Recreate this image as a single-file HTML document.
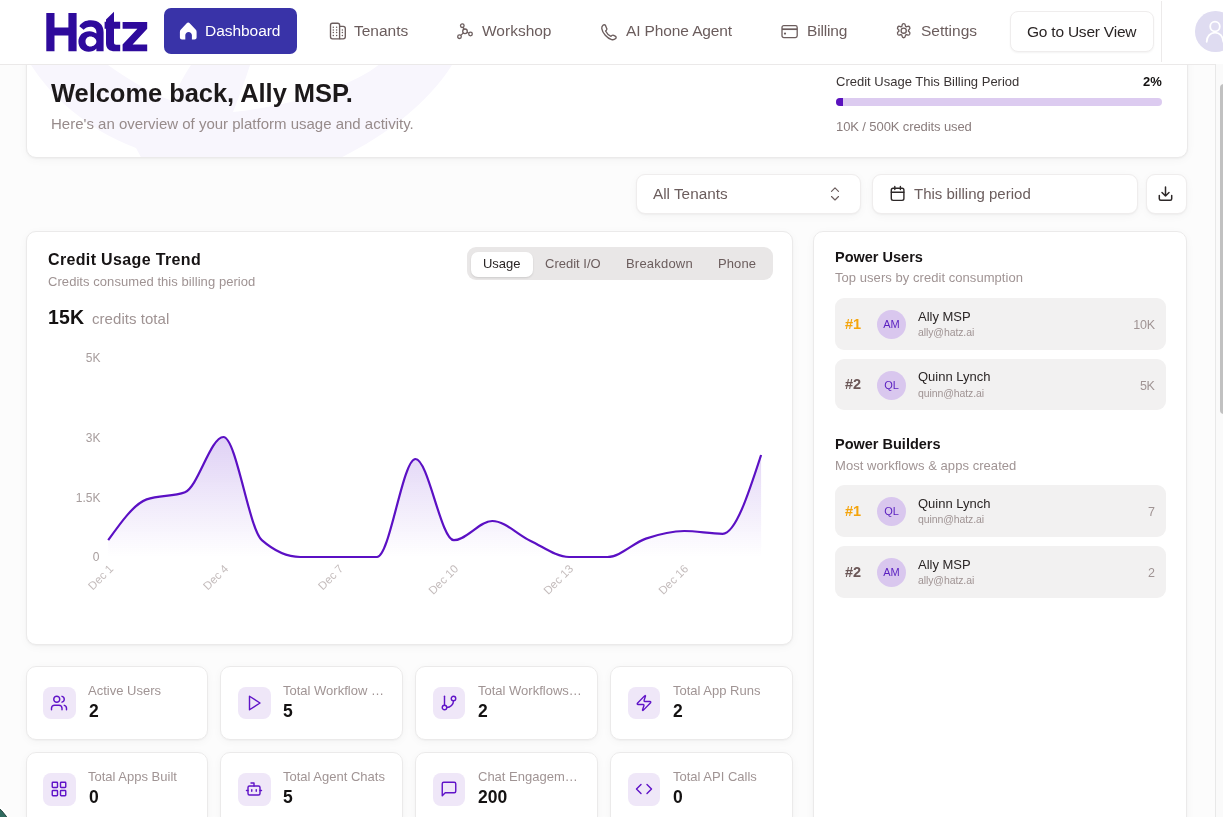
<!DOCTYPE html>
<html><head><meta charset="utf-8">
<style>
*{box-sizing:border-box;margin:0;padding:0}
html,body{width:1223px;height:817px;overflow:hidden}
body{background:#fcfcfc;font-family:"Liberation Sans",sans-serif;position:relative;color:#1b1818}
.a{position:absolute;white-space:nowrap;will-change:transform}
.card{position:absolute;background:#fff;border:1px solid #ebeaea;border-radius:10px;box-shadow:0 1px 2px rgba(0,0,0,.04),0 2px 10px rgba(0,0,0,.035)}
svg{position:absolute;overflow:visible}
.nav{color:#6b5d5d;font-size:15.5px;line-height:18px}
.sub{color:#a09494}
.ib{position:absolute;width:32.5px;height:32.5px;border-radius:8px;background:#efe7f8}

.sl{font-size:13px;color:#a09494;line-height:15px;overflow:hidden;text-overflow:ellipsis}
.sv{font-size:17.5px;font-weight:bold;color:#141212;line-height:20px}
.row{position:absolute;left:20.7px;width:331.2px;height:51.5px;border-radius:9px;background:#f2f1f1}
.rk{position:absolute;left:10px;top:17.5px;font-size:14.5px;font-weight:bold;line-height:16px}
.av{position:absolute;left:42px;top:12px;width:29px;height:29px;border-radius:50%;background:#d9c7ee;color:#5a1fc0;font-size:11px;line-height:29px;text-align:center}
.nm{position:absolute;left:83px;top:10.5px;font-size:13px;color:#2b2626;line-height:15px}
.em{position:absolute;left:83px;top:28px;font-size:10.5px;color:#a09494;line-height:12px;letter-spacing:-.1px}
.vl{position:absolute;right:11.5px;top:20px;font-size:12.5px;color:#a09494;line-height:15px;letter-spacing:-.3px}
</style></head><body>

<!-- welcome card -->
<div class="card" style="left:25.5px;top:20px;width:1162px;height:138.2px;overflow:hidden">
 <svg style="left:-25.5px;top:-20px" width="1223" height="160">
  <path fill="#f8f6fd" fill-rule="evenodd" d="M30,64 C50,95 85,128 135,147 L142,160 L333,160 C380,138 425,105 451,64 Z M107,64 C125,77 150,92 171,100 C175,90 182,76 190,64 Z M249,64 C244,80 238,96 232,111 C300,104 355,82 377.5,64 Z"/>
 </svg>
</div>
<div class="a" style="left:50.7px;top:78px;font-size:25.5px;font-weight:bold;color:#1c191a;line-height:30px;letter-spacing:-.05px">Welcome back, Ally MSP.</div>
<div class="a sub" style="left:51px;top:115px;font-size:15px;line-height:18px;color:#978b8b">Here's an overview of your platform usage and activity.</div>
<div class="a" style="left:836.2px;top:74px;font-size:13px;line-height:15px;color:#3a3434">Credit Usage This Billing Period</div>
<div class="a" style="left:1143px;top:74.3px;font-size:13px;font-weight:bold;line-height:15px;color:#141212">2%</div>
<div class="a" style="left:836.2px;top:98.3px;width:326px;height:8px;border-radius:4px;background:#dccbf0"></div>
<div class="a" style="left:836.2px;top:98.3px;width:6.5px;height:8px;border-radius:4px 0 0 4px;background:#5a12be"></div>
<div class="a" style="left:836px;top:118.6px;font-size:13px;line-height:15px;color:#8a7d7d;letter-spacing:-.1px">10K / 500K credits used</div>

<!-- filter row -->
<div class="card" style="left:636.3px;top:173.8px;width:224.5px;height:40.7px;border-radius:9px;border-color:#efeded"></div>
<div class="a nav" style="left:653.2px;top:184.5px;font-size:15.3px">All Tenants</div>
<svg style="left:828px;top:186px" width="14" height="16" viewBox="0 0 14 16" fill="none" stroke="#6b5d5d" stroke-width="1.15" stroke-linecap="round" stroke-linejoin="round">
 <path d="M3.5,5.3L7,1.8L10.5,5.3M3.5,10.5L7,14L10.5,10.5"/>
</svg>
<div class="card" style="left:872px;top:173.8px;width:265.6px;height:40.7px;border-radius:9px;border-color:#efeded"></div>
<svg style="left:889px;top:185px" width="17" height="17" viewBox="0 0 17 17" fill="none" stroke="#2d2828" stroke-width="1.4" stroke-linecap="round">
 <rect x="2.3" y="3.2" width="12.6" height="12.2" rx="1.8"/>
 <path d="M2.3,7.2H14.9M5.8,1.5V4.5M11.4,1.5V4.5"/>
</svg>
<div class="a nav" style="left:914.3px;top:184.5px;font-size:15px">This billing period</div>
<div class="card" style="left:1145.9px;top:173.8px;width:41px;height:40.7px;border-radius:9px;border-color:#efeded"></div>
<svg style="left:1157px;top:185px" width="17" height="17" viewBox="0 0 17 17" fill="none" stroke="#2d2828" stroke-width="1.5" stroke-linecap="round" stroke-linejoin="round">
 <path d="M2.3,10.5V13.8C2.3,14.7,2.9,15.3,3.8,15.3H13.2C14.1,15.3,14.7,14.7,14.7,13.8V10.5M5,7.5L8.5,11L12,7.5M8.5,11V2"/>
</svg>

<!-- chart card -->
<div class="card" style="left:25.5px;top:230.6px;width:767.8px;height:414px"></div>
<div class="a" style="left:47.7px;top:251px;font-size:16px;font-weight:bold;line-height:18px;color:#161314;letter-spacing:.35px">Credit Usage Trend</div>
<div class="a" style="left:47.7px;top:273.5px;font-size:13px;line-height:15px;color:#9f9393;letter-spacing:.06px">Credits consumed this billing period</div>
<div class="a" style="left:47.7px;top:305.5px;font-size:19.5px;font-weight:bold;line-height:23px;color:#141212;letter-spacing:.2px">15K</div>
<div class="a" style="left:91.7px;top:310px;font-size:15px;line-height:18px;color:#9f9393;letter-spacing:.05px">credits total</div>

<div class="a" style="left:466.5px;top:247px;width:306px;height:33px;border-radius:9px;background:#e9e7e7"></div>
<div class="a" style="left:471px;top:251.5px;width:61.7px;height:24.7px;border-radius:7px;background:#fff;box-shadow:0 1px 2px rgba(0,0,0,.12)"></div>
<div class="a" style="left:482.7px;top:255.5px;font-size:13px;line-height:15px;color:#2a2525;letter-spacing:-.05px">Usage</div>
<div class="a" style="left:545.4px;top:255.5px;font-size:13px;line-height:15px;color:#6b5d5d">Credit I/O</div>
<div class="a" style="left:625.5px;top:255.5px;font-size:13px;line-height:15px;color:#6b5d5d;letter-spacing:.2px">Breakdown</div>
<div class="a" style="left:717.6px;top:255.5px;font-size:13px;line-height:15px;color:#6b5d5d;letter-spacing:.1px">Phone</div>

<svg style="left:0;top:0" width="1223" height="817">
 <defs><linearGradient id="g" x1="0" y1="0" x2="0" y2="1" gradientUnits="objectBoundingBox">
  <stop offset="0" stop-color="#7a3fd6" stop-opacity=".24"/><stop offset="1" stop-color="#7a3fd6" stop-opacity="0"/>
 </linearGradient></defs>
 <g font-family="Liberation Sans" font-size="12" fill="#a79d9d" text-anchor="end">
  <text x="100.5" y="362">5K</text><text x="100.5" y="442">3K</text><text x="100.5" y="502">1.5K</text><text x="99.5" y="560.5">0</text>
 </g>
 <path d="M108.20,540.20C121.00,522.20,133.80,504.20,146.61,499.40C159.41,494.60,172.21,497.00,185.01,492.20C197.81,487.40,210.62,437.00,223.42,437.00C236.22,437.00,249.02,529.00,261.82,540.20C274.63,551.40,287.43,557.00,300.23,557.00C313.03,557.00,325.83,557.00,338.64,557.00C351.44,557.00,364.24,557.00,377.04,557.00C389.84,557.00,402.65,459.00,415.45,459.00C428.25,459.00,441.05,540.20,453.85,540.20C466.65,540.20,479.46,521.00,492.26,521.00C505.06,521.00,517.86,535.00,530.66,541.00C543.47,547.00,556.27,557.00,569.07,557.00C581.87,557.00,594.67,557.00,607.48,557.00C620.28,557.00,633.08,542.93,645.88,538.60C658.68,534.27,671.49,531.00,684.29,531.00C697.09,531.00,709.89,533.80,722.69,533.80C735.50,533.80,748.30,494.40,761.10,455.00L761.10,557L108.20,557Z" fill="url(#g)"/>
 <path d="M108.20,540.20C121.00,522.20,133.80,504.20,146.61,499.40C159.41,494.60,172.21,497.00,185.01,492.20C197.81,487.40,210.62,437.00,223.42,437.00C236.22,437.00,249.02,529.00,261.82,540.20C274.63,551.40,287.43,557.00,300.23,557.00C313.03,557.00,325.83,557.00,338.64,557.00C351.44,557.00,364.24,557.00,377.04,557.00C389.84,557.00,402.65,459.00,415.45,459.00C428.25,459.00,441.05,540.20,453.85,540.20C466.65,540.20,479.46,521.00,492.26,521.00C505.06,521.00,517.86,535.00,530.66,541.00C543.47,547.00,556.27,557.00,569.07,557.00C581.87,557.00,594.67,557.00,607.48,557.00C620.28,557.00,633.08,542.93,645.88,538.60C658.68,534.27,671.49,531.00,684.29,531.00C697.09,531.00,709.89,533.80,722.69,533.80C735.50,533.80,748.30,494.40,761.10,455.00" fill="none" stroke="#5b10c4" stroke-width="2.2"/>
 <g font-family="Liberation Sans" font-size="11.5" fill="#c4bcbc" text-anchor="end">
  <text transform="translate(114,569.5) rotate(-45)">Dec 1</text>
  <text transform="translate(229,569.5) rotate(-45)">Dec 4</text>
  <text transform="translate(344,569.5) rotate(-45)">Dec 7</text>
  <text transform="translate(459,569.5) rotate(-45)">Dec 10</text>
  <text transform="translate(574,569.5) rotate(-45)">Dec 13</text>
  <text transform="translate(689,569.5) rotate(-45)">Dec 16</text>
 </g>
</svg>

<!-- right card -->
<div class="card" style="left:813.3px;top:230.6px;width:374px;height:620px">
 <div class="a" style="left:20.7px;top:17.4px;font-size:14.5px;font-weight:bold;line-height:17px;color:#161314">Power Users</div>
 <div class="a" style="left:20.7px;top:38.6px;font-size:13px;line-height:15px;color:#a09494;letter-spacing:.05px">Top users by credit consumption</div>
 <div class="row" style="top:66.6px"><div class="rk" style="color:#f4a40c">#1</div><div class="av">AM</div><div class="nm">Ally MSP</div><div class="em">ally@hatz.ai</div><div class="vl">10K</div></div>
 <div class="row" style="top:127.4px"><div class="rk" style="color:#6b5757">#2</div><div class="av">QL</div><div class="nm">Quinn Lynch</div><div class="em">quinn@hatz.ai</div><div class="vl">5K</div></div>
 <div class="a" style="left:20.7px;top:204.4px;font-size:14.5px;font-weight:bold;line-height:17px;color:#161314">Power Builders</div>
 <div class="a" style="left:20.7px;top:226.1px;font-size:13px;line-height:15px;color:#a09494;letter-spacing:.05px">Most workflows &amp; apps created</div>
 <div class="row" style="top:253.8px"><div class="rk" style="color:#f4a40c">#1</div><div class="av">QL</div><div class="nm">Quinn Lynch</div><div class="em">quinn@hatz.ai</div><div class="vl">7</div></div>
 <div class="row" style="top:314.6px"><div class="rk" style="color:#6b5757">#2</div><div class="av">AM</div><div class="nm">Ally MSP</div><div class="em">ally@hatz.ai</div><div class="vl">2</div></div>
</div>
<!-- stat cards -->
<div class="card" style="left:25.5px;top:665.5px;width:182.9px;height:74.6px"><div class="ib" style="left:16.7px;top:20.3px"><svg style="left:7.3px;top:7px" width="18" height="18" viewBox="0 0 24 24" fill="none" stroke="#6014c8" stroke-width="1.9" stroke-linecap="round" stroke-linejoin="round"><path d="M16 21v-2a4 4 0 0 0-4-4H6a4 4 0 0 0-4 4v2"/><circle cx="9" cy="7" r="4"/><path d="M22 21v-2a4 4 0 0 0-3-3.87"/><path d="M16 3.13a4 4 0 0 1 0 7.75"/></svg></div><div class="a sl" style="left:61.6px;top:16px;max-width:104px">Active Users</div><div class="a sv" style="left:62px;top:34px">2</div></div>
<div class="card" style="left:220.4px;top:665.5px;width:182.9px;height:74.6px"><div class="ib" style="left:16.7px;top:20.3px"><svg style="left:7.3px;top:7px" width="18" height="18" viewBox="0 0 24 24" fill="none" stroke="#6014c8" stroke-width="1.9" stroke-linecap="round" stroke-linejoin="round"><polygon points="6 3 20 12 6 21 6 3"/></svg></div><div class="a sl" style="left:61.6px;top:16px;max-width:104px">Total Workflow Runs</div><div class="a sv" style="left:62px;top:34px">5</div></div>
<div class="card" style="left:415.3px;top:665.5px;width:182.9px;height:74.6px"><div class="ib" style="left:16.7px;top:20.3px"><svg style="left:7.3px;top:7px" width="18" height="18" viewBox="0 0 24 24" fill="none" stroke="#6014c8" stroke-width="1.9" stroke-linecap="round" stroke-linejoin="round"><line x1="6" x2="6" y1="3" y2="15"/><circle cx="18" cy="6" r="3"/><circle cx="6" cy="18" r="3"/><path d="M18 9a9 9 0 0 1-9 9"/></svg></div><div class="a sl" style="left:61.6px;top:16px;max-width:104px">Total Workflows Created</div><div class="a sv" style="left:62px;top:34px">2</div></div>
<div class="card" style="left:610.3px;top:665.5px;width:182.9px;height:74.6px"><div class="ib" style="left:16.7px;top:20.3px"><svg style="left:7.3px;top:7px" width="18" height="18" viewBox="0 0 24 24" fill="none" stroke="#6014c8" stroke-width="1.9" stroke-linecap="round" stroke-linejoin="round"><path d="M4 14a1 1 0 0 1-.78-1.63l9.9-10.2a.5.5 0 0 1 .86.46l-1.92 6.02A1 1 0 0 0 13 10h7a1 1 0 0 1 .78 1.63l-9.9 10.2a.5.5 0 0 1-.86-.46l1.92-6.02A1 1 0 0 0 11 14z"/></svg></div><div class="a sl" style="left:61.6px;top:16px;max-width:104px">Total App Runs</div><div class="a sv" style="left:62px;top:34px">2</div></div>
<div class="card" style="left:25.5px;top:752.2px;width:182.9px;height:74.6px"><div class="ib" style="left:16.7px;top:20.3px"><svg style="left:7.3px;top:7px" width="18" height="18" viewBox="0 0 24 24" fill="none" stroke="#6014c8" stroke-width="1.9" stroke-linecap="round" stroke-linejoin="round"><rect width="7" height="7" x="3" y="3" rx="1"/><rect width="7" height="7" x="14" y="3" rx="1"/><rect width="7" height="7" x="14" y="14" rx="1"/><rect width="7" height="7" x="3" y="14" rx="1"/></svg></div><div class="a sl" style="left:61.6px;top:16px;max-width:104px">Total Apps Built</div><div class="a sv" style="left:62px;top:34px">0</div></div>
<div class="card" style="left:220.4px;top:752.2px;width:182.9px;height:74.6px"><div class="ib" style="left:16.7px;top:20.3px"><svg style="left:7.3px;top:7px" width="18" height="18" viewBox="0 0 24 24" fill="none" stroke="#6014c8" stroke-width="1.9" stroke-linecap="round" stroke-linejoin="round"><path d="M12 8V4H8"/><rect width="16" height="12" x="4" y="8" rx="2"/><path d="M2 14h2"/><path d="M20 14h2"/><path d="M15 13v2"/><path d="M9 13v2"/></svg></div><div class="a sl" style="left:61.6px;top:16px;max-width:104px">Total Agent Chats</div><div class="a sv" style="left:62px;top:34px">5</div></div>
<div class="card" style="left:415.3px;top:752.2px;width:182.9px;height:74.6px"><div class="ib" style="left:16.7px;top:20.3px"><svg style="left:7.3px;top:7px" width="18" height="18" viewBox="0 0 24 24" fill="none" stroke="#6014c8" stroke-width="1.9" stroke-linecap="round" stroke-linejoin="round"><path d="M21 15a2 2 0 0 1-2 2H7l-4 4V5a2 2 0 0 1 2-2h14a2 2 0 0 1 2 2z"/></svg></div><div class="a sl" style="left:61.6px;top:16px;max-width:104px">Chat Engagement Score</div><div class="a sv" style="left:62px;top:34px">200</div></div>
<div class="card" style="left:610.3px;top:752.2px;width:182.9px;height:74.6px"><div class="ib" style="left:16.7px;top:20.3px"><svg style="left:7.3px;top:7px" width="18" height="18" viewBox="0 0 24 24" fill="none" stroke="#6014c8" stroke-width="1.9" stroke-linecap="round" stroke-linejoin="round"><polyline points="16 18 22 12 16 6"/><polyline points="8 6 2 12 8 18"/></svg></div><div class="a sl" style="left:61.6px;top:16px;max-width:104px">Total API Calls</div><div class="a sv" style="left:62px;top:34px">0</div></div>
<!-- header -->
<div class="a" style="left:0;top:0;width:1223px;height:64.6px;background:#fff;border-bottom:1px solid #ebe9e9"></div>
<svg style="left:0;top:0" width="1223" height="64">
 <g fill="#2e0a9c">
  <path d="M46.3,12.9H54.5V27.6H68.4V12.9H76.6V51.3H68.4V35.6H54.5V51.3H46.3Z"/>
  <path fill-rule="evenodd" d="M79.3,26.2C81.6,22.3,85.6,20.2,90.7,20.2C98.8,20.2,103.6,24.6,103.6,32.2V51.3H96.4V48.6C94.6,50.8,91.7,51.8,88.6,51.8C82.6,51.8,78.4,47.7,78.4,41.6C78.4,35.4,83,31.2,89.5,31.2C92.3,31.2,94.7,32.1,96.4,33.6V32.3C96.4,28.7,94.1,26.7,90.3,26.7C87.6,26.7,85.3,27.8,83.7,29.7ZM90.3,36.4C87.4,36.4,85.5,38.6,85.5,41.4C85.5,44.2,87.4,46.4,90.3,46.4C93.3,46.4,96.4,44.2,96.4,41.4C96.4,38.6,93.3,36.4,90.3,36.4Z"/>
  <path d="M106,19.6L114,11.7V21.8H120.2V28.8H114V42.6C114,44.1,114.8,44.8,116.2,44.8H120.2V51.3H115C109.3,51.3,106,48.5,106,43.2V28.8H104.6V21.8H106Z"/>
  <path d="M122.6,22H147.2V28.8L132.6,44.4H147.2V51.3H122.6V44.6L137.4,28.8H122.6Z"/>
 </g>
</svg>
<div class="a" style="left:163.6px;top:8.3px;width:133px;height:45.7px;border-radius:7px;background:#3933a8"></div>
<svg style="left:179px;top:22px" width="19" height="19" viewBox="0 0 19 19">
 <path fill="#fff" d="M9.2,0.5C9.8,0.5,10.3,0.8,10.7,1.2L16.6,7.5C17.3,8.2,17.6,8.9,17.6,9.9V15.6C17.6,16.9,16.7,17.6,15.5,17.6H12.9V13.3C12.9,11.4,11.3,10.1,9.6,10.1C7.8,10.1,6.3,11.4,6.3,13.3V17.6H3C1.8,17.6,0.9,16.9,0.9,15.6V9.9C0.9,8.9,1.2,8.2,1.9,7.5L7.7,1.2C8.1,0.8,8.6,0.5,9.2,0.5Z"/>
</svg>
<div class="a nav" style="left:204.7px;top:21.5px;color:#fff;letter-spacing:-.05px">Dashboard</div>

<!-- tenants icon -->
<svg style="left:329px;top:22px" width="18" height="18" viewBox="0 0 18 18" fill="none" stroke="#6b5d5d" stroke-width="1.35">
 <path d="M10.6,16.8H3.5C2.1,16.8,1.5,16,1.5,14.8V3.1C1.5,1.9,2.2,1.2,3.4,1.2H8.6C9.8,1.2,10.6,1.9,10.6,3.1Z"/>
 <path d="M10.6,4.4H14.2C15.4,4.4,16.3,5.3,16.3,6.6V14.8C16.3,16,15.5,16.8,14.2,16.8H10.6"/>
 <g fill="#6b5d5d" stroke="none"><circle cx="4.3" cy="5.3" r=".75"/><circle cx="7.6" cy="5.3" r=".75"/><circle cx="4.3" cy="8" r=".75"/><circle cx="7.6" cy="8" r=".75"/><circle cx="4.3" cy="10.5" r=".75"/><circle cx="7.6" cy="10.5" r=".75"/><circle cx="4.3" cy="13.4" r=".75"/><circle cx="7.6" cy="13.4" r=".75"/><circle cx="13.4" cy="8" r=".75"/><circle cx="13.4" cy="10.5" r=".75"/><circle cx="13.4" cy="13.4" r=".75"/></g>
</svg>
<div class="a nav" style="left:354.3px;top:21.5px">Tenants</div>

<!-- workshop icon -->
<svg style="left:456px;top:22px" width="18" height="18" viewBox="0 0 18 18" fill="none" stroke="#6b5d5d" stroke-width="1.3">
 <circle cx="6.3" cy="3.7" r="1.8"/><circle cx="9" cy="9.3" r="2.3"/><circle cx="14.5" cy="12" r="1.8"/><circle cx="3.5" cy="14.7" r="1.8"/>
 <path d="M7.1,5.3L8,7.1M11.1,10.3L12.8,11.2M7.4,10.9L4.8,13.4"/>
</svg>
<div class="a nav" style="left:482.3px;top:21.5px">Workshop</div>

<!-- phone icon -->
<svg style="left:600px;top:22.6px" width="18" height="18" viewBox="0 0 18 18" fill="none" stroke="#6b5d5d" stroke-width="1.35" stroke-linejoin="round">
 <path d="M5.3,2.1C4.6,1.6,3.6,1.8,3,2.3C2,3.1,1.6,4.2,1.8,5.6C2.4,9.9,7.2,15.3,11.6,16.6C13,17,14.5,16.7,15.6,15.6C16.3,14.9,16.3,13.9,15.6,13.4L13.7,12.3C13,11.9,12.3,12.1,11.8,12.6L11,13.3C9,12.5,6.6,10.1,5.6,8L6.4,7.2C6.9,6.7,7,6,6.7,5.4Z"/>
</svg>
<div class="a nav" style="left:626.2px;top:21.5px;letter-spacing:-.12px">AI Phone Agent</div>

<!-- billing icon -->
<svg style="left:780px;top:22px" width="18" height="18" viewBox="0 0 18 18" fill="none" stroke="#6b5d5d" stroke-width="1.3">
 <rect x="2" y="3.6" width="15.2" height="12" rx="1.8"/>
 <path d="M2,7.2H17.2" stroke-width="1.7"/>
 <circle cx="5" cy="11.6" r="1.1" fill="#6b5d5d" stroke="none"/>
</svg>
<div class="a nav" style="left:806.9px;top:21.5px;letter-spacing:-.15px">Billing</div>

<!-- settings icon -->
<svg style="left:894.3px;top:21.1px" width="19.4" height="19.4" viewBox="0 0 24 24" fill="none" stroke="#6b5d5d" stroke-width="1.65" stroke-linejoin="round">
 <path d="M12,2.3C13.3,2.3,13.9,3.2,14.1,4.5L14.3,5.6L15.4,6.2L16.5,5.8C17.7,5.3,18.7,5.5,19.4,6.6C20.1,7.8,19.8,8.7,18.8,9.6L17.9,10.3V11.7L18.8,12.4C19.8,13.3,20.1,14.2,19.4,15.4C18.7,16.5,17.7,16.7,16.5,16.2L15.4,15.8L14.3,16.4L14.1,17.5C13.9,18.8,13.3,19.7,12,19.7C10.7,19.7,10.1,18.8,9.9,17.5L9.7,16.4L8.6,15.8L7.5,16.2C6.3,16.7,5.3,16.5,4.6,15.4C3.9,14.2,4.2,13.3,5.2,12.4L6.1,11.7V10.3L5.2,9.6C4.2,8.7,3.9,7.8,4.6,6.6C5.3,5.5,6.3,5.3,7.5,5.8L8.6,6.2L9.7,5.6L9.9,4.5C10.1,3.2,10.7,2.3,12,2.3Z" transform="translate(0,1)"/>
 <circle cx="12" cy="12" r="3.2"/>
</svg>
<div class="a nav" style="left:920.8px;top:21.5px">Settings</div>

<!-- go to user view -->
<div class="a" style="left:1009.5px;top:11.3px;width:144px;height:41.2px;border:1px solid #efeded;border-radius:8px;background:#fff;box-shadow:0 1px 2px rgba(0,0,0,.05)"></div>
<div class="a nav" style="left:1027px;top:23.3px;color:#2a2525;font-size:15.5px;letter-spacing:-.22px">Go to User View</div>
<div class="a" style="left:1161px;top:1px;width:1px;height:61px;background:#eceaea"></div>
<div class="a" style="left:1195px;top:11.2px;width:40.5px;height:40.5px;border-radius:50%;background:#dfdcf1"></div>
<svg style="left:1195px;top:11px" width="40" height="40" viewBox="0 0 40 40" fill="none" stroke="#fff" stroke-width="1.8" stroke-linecap="round">
 <circle cx="20" cy="15.5" r="4.8"/>
 <path d="M11.7,30.8C11.7,25.5,15.5,21.6,20,21.6C24.5,21.6,28.3,25.5,28.3,30.8"/>
</svg>
<!-- scrollbar -->
<div class="a" style="left:1215px;top:64px;width:8px;height:753px;background:#fafafa;border-left:1px solid #e8e8e8"></div>
<div class="a" style="left:1219.5px;top:84px;width:8px;height:330px;border-radius:4px;background:#c1c1c1"></div>
<!-- chat widget -->
<div class="a" style="left:-63px;top:799px;width:76px;height:76px;border-radius:50%;background:#2f6b5f;border:1.5px solid #1d3d36;box-shadow:0 0 0 2px #fff"></div>
</body></html>
